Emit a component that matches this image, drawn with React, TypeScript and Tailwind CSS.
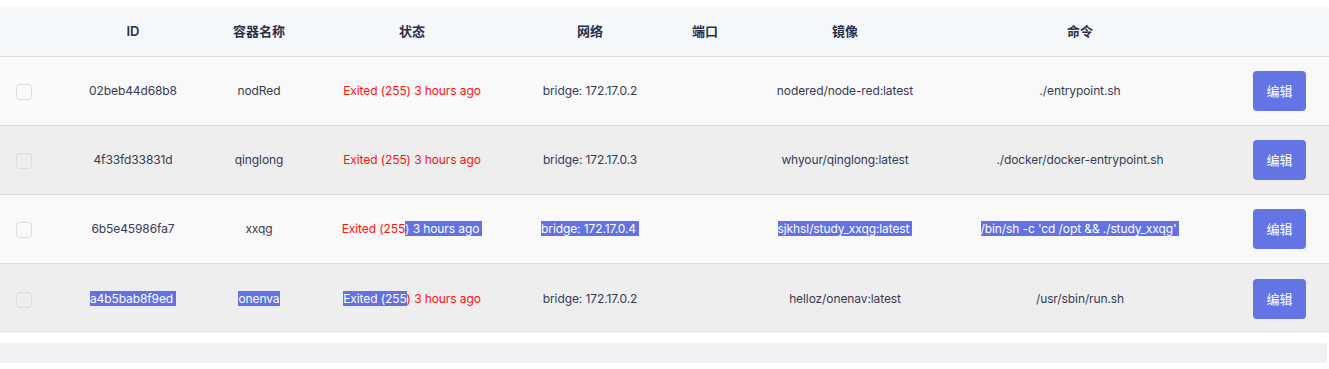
import React from "react";

type Seg = { t: string; hl?: boolean; red?: boolean; pad?: boolean };
type Row = {
  id: Seg[];
  name: Seg[];
  status: Seg[];
  net: Seg[];
  image: Seg[];
  cmd: Seg[];
  bg: string;
};

const cols =
  "grid grid-cols-[48px_170px_82px_224px_132px_98px_182px_288px_1fr] items-center";

function Text({ segs }: { segs: Seg[] }) {
  return (
    <span className="whitespace-pre leading-[17px]">
      {segs.map((s, i) => (
        <span
          key={i}
          className={
            (s.hl ? "bg-[#6272e4] text-white " : "") +
            (s.red && !s.hl ? "text-[#ff1111] " : "") +
            (s.pad ? "pr-[3px] " : "")
          }
        >
          {s.t}
        </span>
      ))}
    </span>
  );
}

const rows: Row[] = [
  {
    id: [{ t: "02beb44d68b8" }],
    name: [{ t: "nodRed" }],
    status: [{ t: "Exited (255) 3 hours ago", red: true }],
    net: [{ t: "bridge: 172.17.0.2" }],
    image: [{ t: "nodered/node-red:latest" }],
    cmd: [{ t: "./entrypoint.sh" }],
    bg: "bg-[#f9f9f9]",
  },
  {
    id: [{ t: "4f33fd33831d" }],
    name: [{ t: "qinglong" }],
    status: [{ t: "Exited (255) 3 hours ago", red: true }],
    net: [{ t: "bridge: 172.17.0.3" }],
    image: [{ t: "whyour/qinglong:latest" }],
    cmd: [{ t: "./docker/docker-entrypoint.sh" }],
    bg: "bg-[#eeeeee]",
  },
  {
    id: [{ t: "6b5e45986fa7" }],
    name: [{ t: "xxqg" }],
    status: [
      { t: "Exited (255", red: true },
      { t: ") 3 hours ago", hl: true, pad: true },
    ],
    net: [{ t: "bridge: 172.17.0.4", hl: true, pad: true }],
    image: [{ t: "sjkhsl/study_xxqg:latest", hl: true, pad: true }],
    cmd: [{ t: "/bin/sh -c 'cd /opt && ./study_xxqg'", hl: true, pad: true }],
    bg: "bg-[#f9f9f9]",
  },
  {
    id: [{ t: "a4b5bab8f9ed", hl: true, pad: true }],
    name: [{ t: "onenva", hl: true }],
    status: [
      { t: "Exited (255", hl: true },
      { t: ") 3 hours ago", red: true },
    ],
    net: [{ t: "bridge: 172.17.0.2" }],
    image: [{ t: "helloz/onenav:latest" }],
    cmd: [{ t: "/usr/sbin/run.sh" }],
    bg: "bg-[#eeeeee]",
  },
];

export default function App() {
  return (
    <div
      className="w-[1329px] h-[369px] bg-white pt-[7px] text-[12px] tracking-[-0.1px] text-[#363b57]"
      style={{ fontFamily: "Inter, 'Noto Sans CJK SC', sans-serif" }}
    >
      <div
        className={`${cols} h-[50px] bg-[#f5f8fb] border-b border-[#dddddd] text-[13px] tracking-normal font-semibold text-[#2c2f48]`}
      >
        <div />
        <div className="text-center">ID</div>
        <div className="text-center">容器名称</div>
        <div className="text-center">状态</div>
        <div className="text-center">网络</div>
        <div className="text-center">端口</div>
        <div className="text-center">镜像</div>
        <div className="text-center">命令</div>
        <div />
      </div>
      {rows.map((r, i) => (
        <div
          key={i}
          className={`${cols} h-[69px] ${r.bg} ${
            i < rows.length - 1 ? "border-b border-[#dddddd]" : ""
          }`}
        >
          <div className="pl-4 pt-[2px]">
            <div className="w-4 h-4 rounded-[4px] border border-[#dadde3]" />
          </div>
          <div className="text-center">
            <Text segs={r.id} />
          </div>
          <div className="text-center">
            <Text segs={r.name} />
          </div>
          <div className="text-center">
            <Text segs={r.status} />
          </div>
          <div className="text-center">
            <Text segs={r.net} />
          </div>
          <div />
          <div className="text-center">
            <Text segs={r.image} />
          </div>
          <div className="text-center">
            <Text segs={r.cmd} />
          </div>
          <div className="pl-[29px]">
            <button
              className="w-[53px] h-[40px] rounded-[4px] bg-[#6374e5] text-white text-[13px] tracking-normal"
              style={{ fontFamily: "'Noto Sans CJK SC', sans-serif" }}
            >
              编辑
            </button>
          </div>
        </div>
      ))}
      <div className="h-[10px]" />
      <div className="h-[20px] w-[1327px] bg-[#f0f1f4]" />
    </div>
  );
}
